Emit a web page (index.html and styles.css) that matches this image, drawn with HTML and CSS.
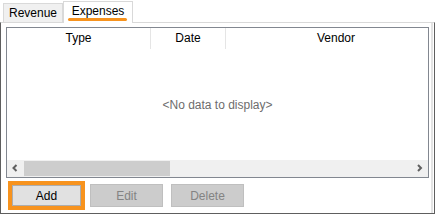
FILE: index.html
```html
<!DOCTYPE html>
<html lang="en">

<head>
    <meta charset="utf-8">
    <title>Expenses</title>
    <link rel="stylesheet" href="styles.css">
</head>

<body>
    <div class="tabs">
        <div class="tab">Revenue</div>
        <div class="tab active">Expenses</div>
    </div>
    <div class="panel">
        <div class="grid">
            <div class="grid-head">
                <div class="col col-type">Type</div>
                <div class="col col-date">Date</div>
                <div class="col col-vendor">Vendor</div>
            </div>
            <div class="grid-body">&lt;No data to display&gt;</div>
            <div class="hscroll">
                <div class="arrow">
                    <svg width="17" height="17" viewBox="0 0 17 17">
                        <polyline points="9.5,5 6.5,8 9.5,11" fill="none" stroke="#606060" stroke-width="2"/>
                    </svg>
                </div>
                <div class="thumb"></div>
                <div class="track"></div>
                <div class="arrow">
                    <svg width="17" height="17" viewBox="0 0 17 17">
                        <polyline points="7,5 10,8 7,11" fill="none" stroke="#606060" stroke-width="2"/>
                    </svg>
                </div>
            </div>
        </div>
        <div class="btn-row">
            <div class="focus-ring">
                <button class="btn btn-add">Add</button>
            </div>
            <button class="btn btn-off btn-edit">Edit</button>
            <button class="btn btn-off">Delete</button>
        </div>
    </div>
</body>

</html>
```

FILE: styles.css
```css
body {
    margin: 0;
    width: 436px;
    height: 216px;
    background-color: #fff;
    font-family: "Liberation Sans", Arial, sans-serif;
    font-size: 12px;
    line-height: 14px;
    color: #000;
    overflow: hidden;
}

.tabs {
    display: flex;
    align-items: flex-end;
    height: 22px;
    padding-left: 3px;
}

.tab {
    box-sizing: border-box;
    height: 19px;
    width: 60px;
    padding-top: 2px;
    border: 1px solid #d9d9d9;
    border-bottom: none;
    background-color: #f0f0f0;
    text-align: center;
}

.tab.active {
    position: relative;
    z-index: 1;
    height: 22px;
    width: 70px;
    margin-bottom: -1px;
    padding: 2px 4px 0;
    border-left: 1px solid #d9d9d9;
    background-color: #fff;
}

.tab.active::after {
    content: "";
    display: block;
    height: 3px;
    margin-top: 0;
    margin-right: 1px;
    border-radius: 2px;
    background-color: #f7931e;
}

.panel {
    box-sizing: border-box;
    width: 435px;
    height: 192px;
    padding: 4px 5px 0;
    border: 1px solid #5e5e5e;
    border-top-color: #d9d9d9;
    box-shadow: inset -1px 0 0 #fff, inset -3px 0 0 #e3e3e3;
}

.grid {
    box-sizing: border-box;
    display: flex;
    flex-direction: column;
    width: 423px;
    height: 151px;
    border: 1px solid #828790;
}

.grid-head {
    display: flex;
    height: 21px;
    overflow: hidden;
    flex-shrink: 0;
}

.col {
    box-sizing: border-box;
    flex-shrink: 0;
    line-height: 21px;
    text-align: center;
    border-right: 1px solid #e5e5e5;
}

.col-type {
    width: 144px;
}

.col-date {
    width: 75px;
}

.col-vendor {
    width: 221px;
}

.grid-body {
    flex: 1;
    display: flex;
    align-items: center;
    justify-content: center;
    color: #6d6d6d;
}

.hscroll {
    display: flex;
    height: 17px;
    background-color: #f0f0f0;
    flex-shrink: 0;
}

.arrow {
    width: 17px;
    height: 17px;
}

.arrow svg {
    display: block;
}

.thumb {
    width: 146px;
    margin: 1px 0;
    background-color: #cdcdcd;
}

.track {
    flex: 1;
}

.btn-row {
    display: flex;
    align-items: center;
    margin: 3px 0 0 2px;
}

.focus-ring {
    border: 4px solid #f7931e;
    margin-right: 5px;
}

.btn {
    box-sizing: border-box;
    display: block;
    width: 73px;
    height: 23px;
    padding: 0;
    border: 1px solid #bfbfbf;
    font-family: inherit;
    font-size: 12px;
    text-align: center;
}

.btn-add {
    width: 69px;
    height: 21px;
    border-color: #adadad;
    background-color: #e1e1e1;
    color: #000;
}

.btn-off {
    background-color: #cccccc;
    color: #838383;
}

.btn-edit {
    margin-right: 8px;
}
```
